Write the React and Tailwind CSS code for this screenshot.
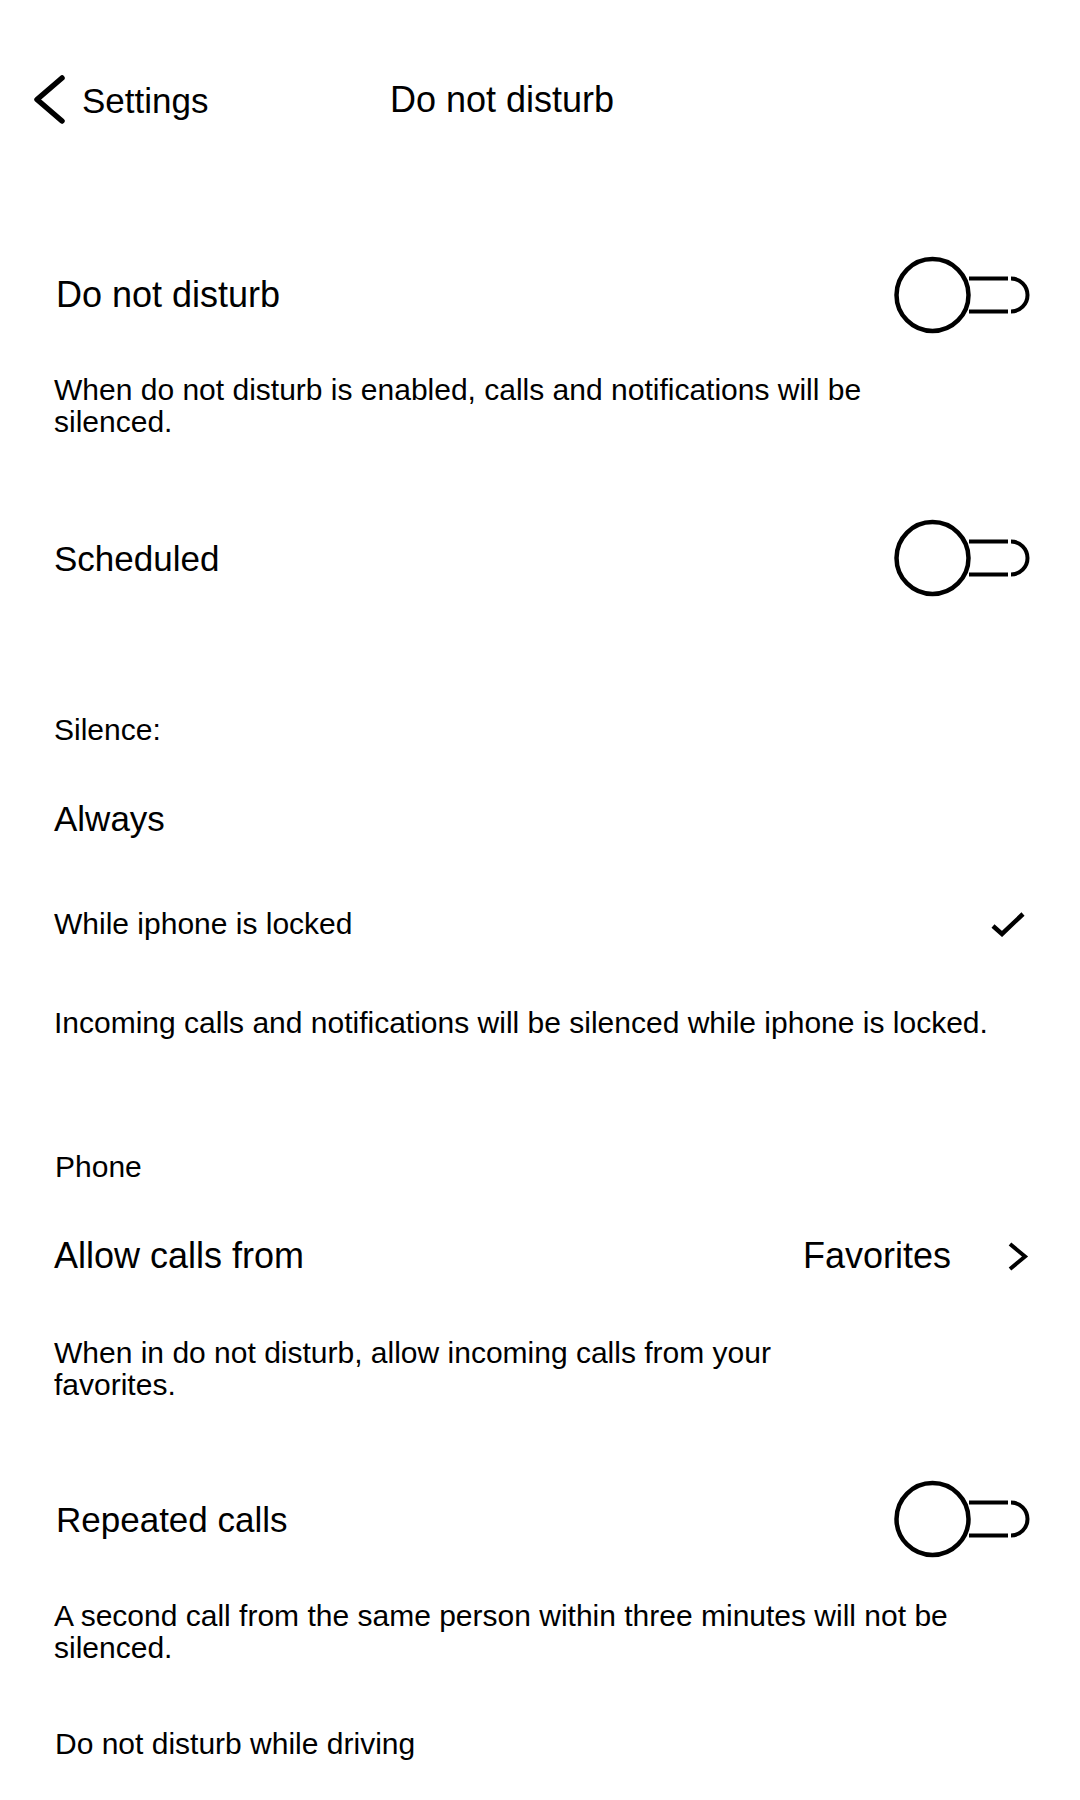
import { useState } from 'react'

function Toggle({ on, onClick }) {
  return (
    <button onClick={onClick} className="w-[140px] h-[80px] shrink-0">
      <svg width="140" height="80" viewBox="0 0 140 80" fill="none" stroke="black">
        <circle cx="40.5" cy="40" r="36" strokeWidth="4.5" fill={on ? 'black' : 'white'} />
        <line x1="77" y1="23.5" x2="116" y2="23.5" strokeWidth="4" />
        <line x1="77" y1="56.5" x2="116" y2="56.5" strokeWidth="4" />
        <path d="M119 23.5 A16.5 16.5 0 0 1 119 56.5" strokeWidth="4" />
      </svg>
    </button>
  )
}

function BackChevron() {
  return (
    <svg width="34" height="54" viewBox="0 0 34 54" fill="none">
      <polyline points="30,5 5,26.5 30,48" stroke="black" strokeWidth="5.5" strokeLinecap="round" strokeLinejoin="round" />
    </svg>
  )
}

function Check() {
  return (
    <svg width="34" height="26" viewBox="0 0 34 26" fill="none">
      <polyline points="2,15 11,23 32,3" stroke="black" strokeWidth="4.5" />
    </svg>
  )
}

function ChevronRight() {
  return (
    <svg width="22" height="32" viewBox="0 0 22 32" fill="none">
      <polyline points="3,4 18,16.5 3,29" stroke="black" strokeWidth="4" />
    </svg>
  )
}

export default function App() {
  const [dnd, setDnd] = useState(false)
  const [scheduled, setScheduled] = useState(false)
  const [repeated, setRepeated] = useState(false)

  return (
    <div className="w-[1080px] min-h-[1800px] bg-white text-black font-['Liberation_Sans',Arial,sans-serif]">
      {/* header */}
      <div className="flex items-center h-[200px] pl-[32px]">
        <div className="flex items-center w-[358px]">
          <BackChevron />
          <span className="ml-[16px] text-[35px] leading-none">Settings</span>
        </div>
        <h1 className="text-[36px] leading-none">Do not disturb</h1>
      </div>

      <div className="flex flex-col pl-[54px]">
        <div className="flex items-center justify-between h-[80px] mt-[55px] pr-[48px]">
          <span className="ml-[2px] text-[36px] leading-none">Do not disturb</span>
          <Toggle on={dnd} onClick={() => setDnd(!dnd)} />
        </div>
        <p className="w-[850px] mt-[39px] text-[30px] leading-[32px]">
          When do not disturb is enabled, calls and notifications will be silenced.
        </p>

        <div className="flex items-center justify-between h-[80px] mt-[80px] pr-[48px]">
          <span className="text-[35px] leading-none">Scheduled</span>
          <Toggle on={scheduled} onClick={() => setScheduled(!scheduled)} />
        </div>

        <div className="flex items-center h-[36px] mt-[114px] text-[30px] leading-none">Silence:</div>
        <div className="flex items-center h-[42px] mt-[49px] text-[35px] leading-none">Always</div>
        <div className="flex items-center justify-between h-[42px] mt-[64px] pr-[55px]">
          <span className="text-[30px] leading-none">While iphone is locked</span>
          <Check />
        </div>
        <div className="flex items-center h-[36px] mt-[60px] text-[30px] leading-none whitespace-nowrap">
          Incoming calls and notifications will be silenced while iphone is locked.
        </div>

        <div className="flex items-center h-[36px] mt-[108px] ml-[1px] text-[30px] leading-none">Phone</div>
        <div className="flex items-center justify-between h-[42px] mt-[50px] pr-[51px]">
          <span className="text-[36px] leading-none">Allow calls from</span>
          <div className="flex items-center gap-[56px]">
            <span className="text-[36px] leading-none">Favorites</span>
            <ChevronRight />
          </div>
        </div>
        <p className="w-[800px] mt-[60px] text-[30px] leading-[32px]">
          When in do not disturb, allow incoming calls from your favorites.
        </p>

        <div className="flex items-center justify-between h-[80px] mt-[78px] pr-[48px]">
          <span className="ml-[2px] text-[35px] leading-none">Repeated calls</span>
          <Toggle on={repeated} onClick={() => setRepeated(!repeated)} />
        </div>
        <p className="w-[960px] mt-[41px] text-[30px] leading-[32px]">
          A second call from the same person within three minutes will not be silenced.
        </p>

        <div className="flex items-center h-[36px] mt-[62px] ml-[1px] text-[30px] leading-none">
          Do not disturb while driving
        </div>
      </div>
    </div>
  )
}
